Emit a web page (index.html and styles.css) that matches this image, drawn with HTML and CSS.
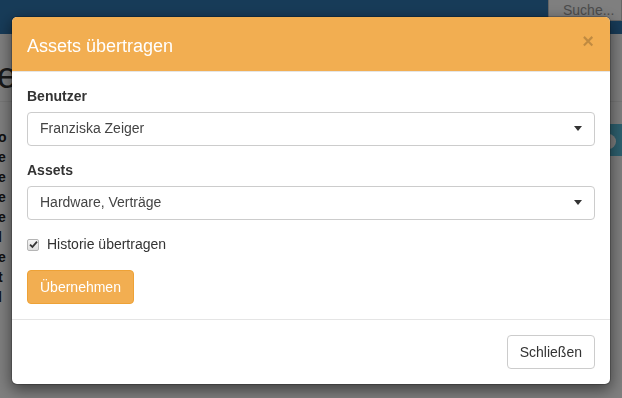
FILE: index.html
```html
<!DOCTYPE html>
<html lang="de">
<head>
    <meta charset="UTF-8">
    <meta name="viewport" content="width=device-width, initial-scale=1.0">
    <title>Assets übertragen</title>
<link rel="stylesheet" href="styles.css">
</head>
<body>

<div class="page">
  <nav class="navbar">
    <div class="search">Suche...</div>
  </nav>

  <div class="content">
    <h1 class="page-title">e</h1>
    <div class="page-text">
      <span>o</span>
      <span>e</span>
      <span>e</span>
      <span>e</span>
      <span>e</span>
      <span>l</span>
      <span>e</span>
      <span>t</span>
      <span>l</span>
    </div>
    <div class="info-badge"><span class="badge-dot"></span></div>
  </div>
</div>

<div class="backdrop"></div>

<div class="modal">
  <div class="modal-dialog">
    <div class="modal-header">
      <button class="close" type="button">&times;</button>
      <h4 class="modal-title">Assets übertragen</h4>
    </div>

    <div class="modal-body">
      <div class="form-group">
        <label>Benutzer</label>
        <div class="form-control">
          <span>Franziska Zeiger</span>
          <b class="caret"></b>
        </div>
      </div>

      <div class="form-group">
        <label>Assets</label>
        <div class="form-control">
          <span>Hardware, Verträge</span>
          <b class="caret"></b>
        </div>
      </div>

      <div class="checkbox">
        <span class="check">
          <svg width="9" height="9" viewBox="0 0 9 9"><path d="M1 4.6 L3.4 7 L8 1.6" fill="none" stroke="#333" stroke-width="1.8"/></svg>
        </span>
        Historie übertragen
      </div>

      <button class="btn btn-warning" type="button">Übernehmen</button>
    </div>

    <div class="modal-footer">
      <button class="btn btn-default" type="button">Schließen</button>
    </div>
  </div>
</div>

</body>
</html>
```

FILE: styles.css
```css
* { box-sizing: border-box }

body {
  margin: 0;
  font-family: "Liberation Sans", Arial, sans-serif;
  font-size: 14px;
  line-height: 1.42857;
  color: #333;
  background: #fff;
  overflow: hidden;
}

/* page behind the dialog */

.navbar {
  height: 34px;
  background: #2f77b1;
  display: flex;
  justify-content: flex-end;
}

.search {
  width: 74px;
  height: 21px;
  background: #fff;
  border: 1px solid #ccc;
  border-top: 0;
  color: #999;
  font-size: 14px;
  line-height: 20px;
  padding-left: 14px;
  white-space: nowrap;
  overflow: hidden;
}

.content {
  position: relative;
  height: 364px;
}

.page-title {
  margin: 0;
  padding-top: 22px;
  margin-left: -3px;
  font-size: 36px;
  font-weight: normal;
  line-height: 40px;
  color: #333;
  height: 68px;
  border-bottom: 1px solid #eee;
}

.page-text {
  display: flex;
  flex-direction: column;
  margin-top: 25px;
  margin-left: -2px;
  line-height: 20px;
  color: #222;
  font-weight: bold;
}

.info-badge {
  position: absolute;
  top: 90px;
  right: -20px;
  width: 40px;
  height: 32px;
  background: #5bc0de;
  border-radius: 4px;
}

.badge-dot {
  position: absolute;
  left: -1px;
  top: 10px;
  width: 15px;
  height: 15px;
  border-radius: 50%;
  background: #fff;
}

.backdrop {
  position: fixed;
  inset: 0;
  background: rgba(0, 0, 0, 0.5);
}

/* dialog */

.modal {
  position: fixed;
  inset: 0;
}

.modal-dialog {
  width: 600px;
  margin: 16px auto 0;
  background: #fff;
  background-clip: padding-box;
  border: 1px solid rgba(0, 0, 0, 0.2);
  border-radius: 6px;
  box-shadow: 0 5px 15px rgba(0, 0, 0, 0.5);
}

.modal-header {
  background: #f2ae51;
  padding: 17px 15px 12px;
  border-bottom: 1px solid #e5e5e5;
  border-radius: 5px 5px 0 0;
}

.modal-title {
  margin: 0;
  font-size: 18px;
  font-weight: normal;
  line-height: 25px;
  color: #fff;
}

.close {
  float: right;
  margin-top: -3px;
  margin-right: 1px;
  padding: 0;
  border: 0;
  background: transparent;
  font-family: "Liberation Sans", Arial, sans-serif;
  font-size: 20px;
  font-weight: bold;
  line-height: 1;
  color: #000;
  opacity: 0.2;
}

.modal-body {
  padding: 15px;
}

.form-group {
  margin-bottom: 15px;
}

label {
  display: block;
  font-weight: bold;
  margin-bottom: 5px;
}

.form-control {
  display: flex;
  align-items: center;
  justify-content: space-between;
  height: 34px;
  padding: 6px 12px;
  border: 1px solid #ccc;
  border-radius: 4px;
  color: #444;
}

.caret {
  width: 0;
  height: 0;
  border-left: 4px solid transparent;
  border-right: 4px solid transparent;
  border-top: 5px solid #333;
}

.checkbox {
  display: flex;
  align-items: center;
  margin: 10px 0 15px;
  min-height: 20px;
  color: #333;
}

.check {
  display: flex;
  align-items: center;
  justify-content: center;
  width: 12px;
  height: 12px;
  margin: 0 8px 0 0;
  border: 1px solid #b5b5b5;
  border-radius: 2px;
  background: linear-gradient(#f4f4f4, #dedede);
}

.btn {
  display: inline-block;
  padding: 6px 12px;
  font-family: "Liberation Sans", Arial, sans-serif;
  font-size: 14px;
  line-height: 20px;
  border: 1px solid transparent;
  border-radius: 4px;
  cursor: pointer;
}

.btn-warning {
  color: #fff;
  background: #f2ae51;
  border-color: #eea236;
}

.btn-default {
  color: #333;
  background: #fff;
  border-color: #ccc;
}

.modal-footer {
  padding: 15px;
  text-align: right;
  border-top: 1px solid #e5e5e5;
}
```
